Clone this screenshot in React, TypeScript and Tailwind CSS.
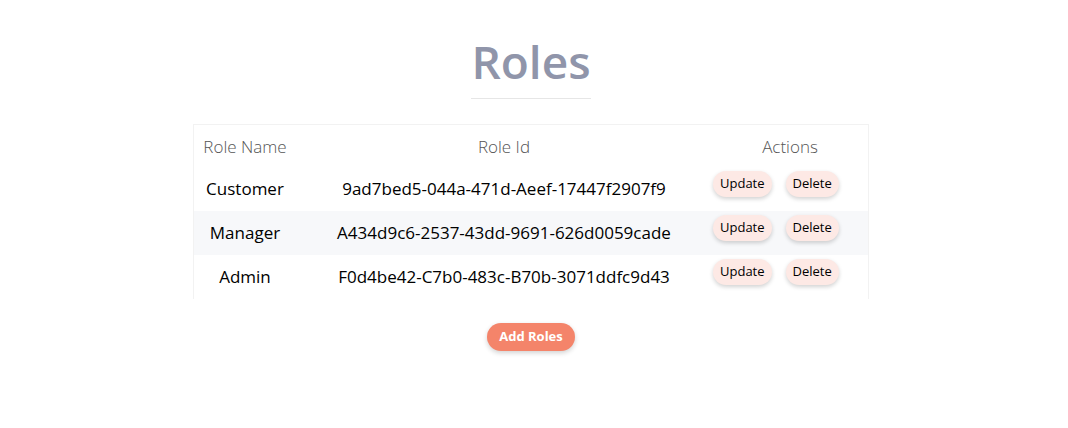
const ROLES = [
  { name: "Customer", id: "9ad7bed5-044a-471d-Aeef-17447f2907f9" },
  { name: "Manager", id: "A434d9c6-2537-43dd-9691-626d0059cade" },
  { name: "Admin", id: "F0d4be42-C7b0-483c-B70b-3071ddfc9d43" },
];

function PillButton({ children }: { children: React.ReactNode }) {
  return (
    <button className="h-[26px] rounded-full bg-[#fde9e5] px-[7px] text-[13px] text-black shadow-[0_2px_4px_rgba(0,0,0,0.18)]">
      {children}
    </button>
  );
}

export default function App() {
  return (
    <div className="min-h-[428px] w-full bg-white font-['Open_Sans',sans-serif]">
      <div className="flex flex-col items-center pt-[30px] pr-[6px]">
        <h1 className="border-b border-[#e6e6e6] pb-[6px] text-[46px] leading-[62px] font-semibold text-[#9095aa]">
          Roles
        </h1>

        <div className="mt-[25px] w-[676px] border border-b-0 border-[#f2f2f2]">
          <table className="w-full border-collapse text-center">
            <thead>
              <tr className="h-[42px] text-[17px] font-light text-[#555]">
                <th className="w-[102px] pt-[2px] font-light">Role Name</th>
                <th className="w-[416px] pt-[2px] font-light">Role Id</th>
                <th className="pt-[2px] font-light">Actions</th>
              </tr>
            </thead>
            <tbody className="text-[17px] text-black">
              {ROLES.map((r, i) => (
                <tr key={r.id} className={i === 1 ? "h-[44px] bg-[#f7f8fa]" : "h-[44px]"}>
                  <td>{r.name}</td>
                  <td>{r.id}</td>
                  <td className="pb-[10px] text-left">
                    <div className="flex gap-[14px] pl-[1px]">
                      <PillButton>Update</PillButton>
                      <PillButton>Delete</PillButton>
                    </div>
                  </td>
                </tr>
              ))}
            </tbody>
          </table>
        </div>

        <button className="mt-[24px] h-[28px] rounded-full bg-[#f4846a] px-[12px] text-[13px] font-bold text-white shadow-[0_2px_5px_rgba(0,0,0,0.18)]">
          Add Roles
        </button>
      </div>
    </div>
  );
}
